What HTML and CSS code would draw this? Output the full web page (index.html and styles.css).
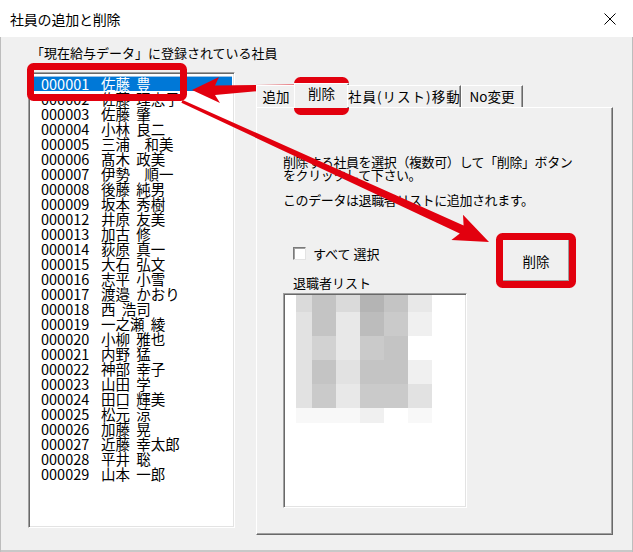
FILE: index.html
```html
<!DOCTYPE html>
<html lang="ja">
<head>
  <meta charset="UTF-8">
  <title>社員の追加と削除</title>
  <link rel="stylesheet" href="styles.css">
</head>
<body>
  <div class="dialog">
    <div class="titlebar">
      <span class="caption">社員の追加と削除</span>
      <span class="close">
        <svg width="12" height="12" viewBox="0 0 12 12"><path d="M0.5 0.5 L11.5 11.5 M11.5 0.5 L0.5 11.5" stroke="#000" stroke-width="1" fill="none"/></svg>
      </span>
    </div>

    <div class="client">
      <div class="left-col">
        <div class="group-label">「現在給与データ」に登録されている社員</div>
        <ul class="listbox staff-list">
          <li class="selected"><span class="code">000001</span><span class="name">佐藤 豊</span></li>
          <li><span class="code">000002</span><span class="name">佐藤 理恵子</span></li>
          <li><span class="code">000003</span><span class="name">佐藤 肇</span></li>
          <li><span class="code">000004</span><span class="name">小林 良二</span></li>
          <li><span class="code">000005</span><span class="name">三浦　和美</span></li>
          <li><span class="code">000006</span><span class="name">髙木 政美</span></li>
          <li><span class="code">000007</span><span class="name">伊勢　順一</span></li>
          <li><span class="code">000008</span><span class="name">後藤 純男</span></li>
          <li><span class="code">000009</span><span class="name">坂本 秀樹</span></li>
          <li><span class="code">000012</span><span class="name">井原 友美</span></li>
          <li><span class="code">000013</span><span class="name">加古 修</span></li>
          <li><span class="code">000014</span><span class="name">荻原 真一</span></li>
          <li><span class="code">000015</span><span class="name">大石 弘文</span></li>
          <li><span class="code">000016</span><span class="name">志平 小雪</span></li>
          <li><span class="code">000017</span><span class="name">渡邉 かおり</span></li>
          <li><span class="code">000018</span><span class="name">西 浩司</span></li>
          <li><span class="code">000019</span><span class="name">一之瀬 綾</span></li>
          <li><span class="code">000020</span><span class="name">小柳 雅也</span></li>
          <li><span class="code">000021</span><span class="name">内野 猛</span></li>
          <li><span class="code">000022</span><span class="name">神部 幸子</span></li>
          <li><span class="code">000023</span><span class="name">山田 学</span></li>
          <li><span class="code">000024</span><span class="name">田口 輝美</span></li>
          <li><span class="code">000025</span><span class="name">松元 涼</span></li>
          <li><span class="code">000026</span><span class="name">加藤 晃</span></li>
          <li><span class="code">000027</span><span class="name">近藤 幸太郎</span></li>
          <li><span class="code">000028</span><span class="name">平井 聡</span></li>
          <li><span class="code">000029</span><span class="name">山本 一郎</span></li>
        </ul>
      </div>

      <div class="tabs">
        <div class="tab-strip">
          <div class="tab tab-add">追加</div>
          <div class="tab tab-del active">削除</div>
          <div class="tab tab-move">社員(リスト)移動</div>
          <div class="tab tab-no">No変更</div>
        </div>
        <div class="tab-page">
          <p class="desc">削除する社員を選択（複数可）して「削除」ボタン<br>をクリックして下さい。<br><br>このデータは退職者リストに追加されます。</p>
          <div class="page-lower">
            <div class="retire-col">
              <label class="check-row"><span class="checkbox"></span>すべて 選択</label>
              <div class="retire-label">退職者リスト</div>
              <div class="listbox retire-list">
                <!-- names are pixelated -->
                <div class="mosaic">
                  <i class="px6"></i><i class="px3"></i><i class="px6"></i><i class="px1"></i><i class="px3"></i><i class="px8"></i>
                  <i class="px7"></i><i class="px3"></i><i class="px8"></i><i class="px2"></i><i class="px4"></i><i class="px9"></i>
                  <i class="px7"></i><i class="px5"></i><i class="px8"></i><i class="px4"></i><i class="px3"></i><i></i>
                  <i class="px7"></i><i class="px3"></i><i class="px7"></i><i class="px3"></i><i class="px3"></i><i class="px9"></i>
                  <i class="px7"></i><i class="px4"></i><i class="px8"></i><i class="px4"></i><i class="px4"></i><i class="px7"></i>
                  <i class="px10"></i><i class="px10"></i><i class="px10"></i><i class="px9"></i><i></i><i class="px10"></i>
                </div>
              </div>
            </div>
            <button class="btn">削除</button>
          </div>
        </div>
      </div>
    </div>

    <!-- red callouts drawn over the dialog -->
    <svg class="marks" width="633" height="552" viewBox="0 0 633 552">
      <g fill="#e2000e">
        <polygon points="192,90 219,77 215,85.5 296,84.5 296,87.5 215,95 220,103"/>
        <polygon points="489,242 463,214.7 463.6,225.4 182.6,100 181.4,102.8 459.8,233.6 451.4,240.1"/>
      </g>
      <g fill="none" stroke="#e2000e" stroke-width="7">
        <rect x="30.5" y="66.5" width="153" height="31" rx="3"/>
        <rect x="297.5" y="80.5" width="48" height="31" rx="3"/>
        <rect x="499.5" y="236.5" width="73" height="48" rx="3"/>
      </g>
    </svg>
  </div>
</body>
</html>
```

FILE: styles.css
```css
body {
  margin: 0;
  font-family: "Noto Sans CJK JP", sans-serif;
  background: #f0f0f0;
  color: #000;
}

.dialog {
  position: relative;
  width: 633px;
  height: 552px;
  background: #f0f0f0;
  overflow: hidden;
  box-shadow: inset 1px 0 #bdbdbd, inset -1px 0 #bdbdbd, inset 0 -2px #c8c8c8;
}

/* title bar */
.titlebar {
  height: 37px;
  background: #fff;
  display: flex;
  align-items: center;
  justify-content: space-between;
  padding-left: 10px;
}
.caption {
  font-size: 14px;
  letter-spacing: -0.2px;
}
.close {
  width: 46px;
  display: flex;
  justify-content: center;
}

/* body of the dialog */
.client {
  display: flex;
  gap: 21px;
  padding: 8px 0 0 28px;
}
.left-col {
  width: 207px;
}
.group-label {
  font-size: 13px;
  line-height: 16px;
  margin-left: 3px;
  white-space: nowrap;
}

/* sunken list boxes */
.listbox {
  box-sizing: border-box;
  background: #fff;
  border: 1px solid;
  border-color: #a0a0a0 #fff #fff #a0a0a0;
  box-shadow: inset 1px 1px #696969, inset -1px -1px #e3e3e3;
}
.staff-list {
  margin: 11px 0 0;
  padding: 3px 2px 0 2px;
  height: 456px;
  list-style: none;
  font-size: 14.5px;
  line-height: 15px;
}
.staff-list li {
  display: flex;
  padding-left: 10px;
  white-space: nowrap;
}
.staff-list .code {
  width: 60px;
}
.staff-list .name {
  word-spacing: 3px;
}
.staff-list li.selected {
  background: #0078d7;
  color: #fff;
  box-shadow: inset 0 1px #9cc3e6;
}

/* tab control */
.tabs {
  width: 357px;
  margin-top: 38px;
}
.tab-strip {
  display: flex;
  align-items: flex-end;
  height: 24px;
  position: relative;
  z-index: 1;
}
.tab {
  box-sizing: border-box;
  height: 22px;
  border: 1px solid;
  border-color: #fff #696969 transparent #fff;
  border-bottom: none;
  box-shadow: inset -1px 0 #a0a0a0;
  font-size: 13.5px;
  line-height: 20px;
  text-align: center;
  white-space: nowrap;
  background: #f0f0f0;
}
.tab-add { width: 40px; }
.tab-del { width: 51px; }
.tab-move {
  width: 114px;
  letter-spacing: 1px;
}
.tab-no { width: 62px; }
.tab.active {
  height: 25px;
  margin: 0 -2px -1px;
  width: 55px;
  line-height: 19px;
}
.tab-page {
  box-sizing: border-box;
  height: 428px;
  border: 1px solid;
  border-color: #fff #696969 #696969 #fff;
  box-shadow: inset -1px -1px #a0a0a0;
  padding: 48px 0 0 26px;
}
.desc {
  margin: 0;
  font-size: 13px;
  line-height: 12.5px;
  letter-spacing: -0.4px;
  white-space: nowrap;
}

.page-lower {
  display: flex;
  align-items: flex-start;
  margin-top: 33px;
}
.retire-col {
  width: 184px;
  padding-top: 6px;
}
.check-row {
  display: flex;
  align-items: center;
  gap: 7px;
  height: 16px;
  padding-left: 10px;
  font-size: 13px;
}
.checkbox {
  box-sizing: border-box;
  width: 13px;
  height: 13px;
  background: #fff;
  border: 1px solid;
  border-color: #7a7a7a #e3e3e3 #e3e3e3 #7a7a7a;
  box-shadow: inset 1px 1px #a0a0a0;
}
.retire-label {
  margin-top: 14px;
  padding-left: 10px;
  font-size: 13px;
  line-height: 16px;
}
.retire-list {
  margin-top: 2px;
  height: 215px;
}
.mosaic {
  display: grid;
  grid-template-columns: 16px repeat(5, 24px);
  grid-template-rows: 17px repeat(4, 24px) 15px;
  margin: 1px 0 0 12px;
}
.mosaic i { background: #fff; }
.mosaic .px1 { background: #b4b4b4; }
.mosaic .px2 { background: #bcbcbc; }
.mosaic .px3 { background: #c4c4c4; }
.mosaic .px4 { background: #cacaca; }
.mosaic .px5 { background: #d2d2d2; }
.mosaic .px6 { background: #dadada; }
.mosaic .px7 { background: #e2e2e2; }
.mosaic .px8 { background: #e8e8e8; }
.mosaic .px9 { background: #f0f0f0; }
.mosaic .px10 { background: #f8f8f8; }

.btn {
  box-sizing: border-box;
  width: 68px;
  height: 43px;
  margin-left: 35px;
  padding: 0;
  background: #f0f0f0;
  border: 1px solid;
  border-color: #fff #696969 #696969 #fff;
  box-shadow: inset -1px -1px #a0a0a0;
  font-family: inherit;
  font-size: 13.5px;
  color: #000;
}

/* annotation layer */
.marks {
  position: absolute;
  top: 0;
  left: 0;
  pointer-events: none;
}
```
